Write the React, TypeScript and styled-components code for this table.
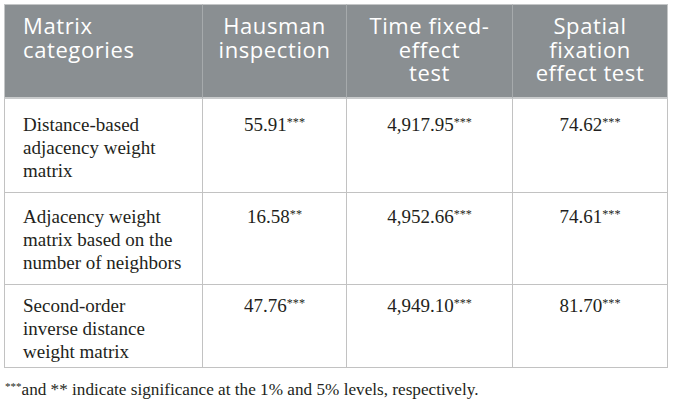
import React from 'react';
import styled, { createGlobalStyle } from 'styled-components';

const GlobalStyle = createGlobalStyle`
  body {
    margin: 0;
    background: #ffffff;
  }
`;

const Page = styled.div`
  width: 673px;
  height: 408px;
  box-sizing: border-box;
  padding: 4px 5px 0 4px;
  background: #ffffff;
`;

const Table = styled.table`
  width: 664px;
  table-layout: fixed;
  border-collapse: separate;
  border-spacing: 0;
`;

const Col = styled.col<{ $w: number }>`
  width: ${({ $w }) => $w}px;
`;

const HeadRow = styled.tr`
  background: #8a8f92;
`;

const HeadCell = styled.th<{ $align?: 'left' | 'center'; $first?: boolean }>`
  box-sizing: border-box;
  height: 94px;
  padding: 9px 10px 12px ${({ $first }) => ($first ? '18px' : '10px')};
  text-align: ${({ $align }) => $align || 'center'};
  vertical-align: top;
  font-family: 'Open Sans', 'Liberation Sans', sans-serif;
  font-weight: 400;
  font-size: 22px;
  letter-spacing: 0.6px;
  line-height: 23.5px;
  color: #ffffff;
  white-space: nowrap;
  border-top: 1px solid #c4c6c7;
  border-bottom: 2px solid #c9cbcc;
  border-left: 1px solid ${({ $first }) => ($first ? '#c4c6c7' : '#a6aaac')};
  &:last-child {
    border-right: 1px solid #c4c6c7;
  }
`;

const BodyRow = styled.tr<{ $h: number }>`
  height: ${({ $h }) => $h}px;
`;

const Cell = styled.td<{ $align?: 'left' | 'center'; $first?: boolean; $top: number }>`
  box-sizing: border-box;
  padding: ${({ $top }) => $top}px 10px 2px ${({ $first }) => ($first ? '18px' : '10px')};
  text-align: ${({ $align }) => $align || 'center'};
  vertical-align: top;
  font-family: 'Liberation Serif', 'Times New Roman', serif;
  font-size: 19px;
  line-height: 23.3px;
  color: #231f20;
  white-space: nowrap;
  border-bottom: 1px solid #c2c2c2;
  border-left: 1px solid #c2c2c2;
  &:last-child {
    border-right: 1px solid #c2c2c2;
  }
`;

const Line = styled.span`
  display: block;
`;

const Stars = styled.sup`
  font-size: 0.64em;
  line-height: 0;
  vertical-align: 0.42em;
`;

const Note = styled.p`
  margin: 12px 0 0 1px;
  font-family: 'Liberation Serif', 'Times New Roman', serif;
  font-size: 17.2px;
  line-height: 20px;
  color: #231f20;
  white-space: nowrap;
`;

type Row = {
  name: string[];
  hausman: [string, string];
  time: [string, string];
  spatial: [string, string];
  h: number;
  top: number;
};

const rows: Row[] = [
  {
    name: ['Distance-based', 'adjacency weight', 'matrix'],
    hausman: ['55.91', '***'],
    time: ['4,917.95', '***'],
    spatial: ['74.62', '***'],
    h: 94,
    top: 14,
  },
  {
    name: ['Adjacency weight', 'matrix based on the', 'number of neighbors'],
    hausman: ['16.58', '**'],
    time: ['4,952.66', '***'],
    spatial: ['74.61', '***'],
    h: 92,
    top: 12,
  },
  {
    name: ['Second-order', 'inverse distance', 'weight matrix'],
    hausman: ['47.76', '***'],
    time: ['4,949.10', '***'],
    spatial: ['81.70', '***'],
    h: 83,
    top: 9,
  },
];

function Value({ v }: { v: [string, string] }) {
  return (
    <>
      {v[0]}
      <Stars>{v[1]}</Stars>
    </>
  );
}

export default function App() {
  return (
    <Page>
      <GlobalStyle />
      <Table>
        <colgroup>
          <Col $w={198} />
          <Col $w={144} />
          <Col $w={166} />
          <Col $w={156} />
        </colgroup>
        <thead>
          <HeadRow>
            <HeadCell $align="left" $first>
              <Line>Matrix</Line>
              <Line>categories</Line>
            </HeadCell>
            <HeadCell>
              <Line>Hausman</Line>
              <Line>inspection</Line>
            </HeadCell>
            <HeadCell>
              <Line>Time fixed-</Line>
              <Line>effect</Line>
              <Line>test</Line>
            </HeadCell>
            <HeadCell>
              <Line>Spatial</Line>
              <Line>fixation</Line>
              <Line>effect test</Line>
            </HeadCell>
          </HeadRow>
        </thead>
        <tbody>
          {rows.map((r) => (
            <BodyRow key={r.name.join(' ')} $h={r.h}>
              <Cell $align="left" $first $top={r.top}>
                {r.name.map((l) => (
                  <Line key={l}>{l}</Line>
                ))}
              </Cell>
              <Cell $top={r.top}>
                <Value v={r.hausman} />
              </Cell>
              <Cell $top={r.top}>
                <Value v={r.time} />
              </Cell>
              <Cell $top={r.top}>
                <Value v={r.spatial} />
              </Cell>
            </BodyRow>
          ))}
        </tbody>
      </Table>
      <Note>
        <Stars>***</Stars>and ** indicate significance at the 1% and 5% levels, respectively.
      </Note>
    </Page>
  );
}
